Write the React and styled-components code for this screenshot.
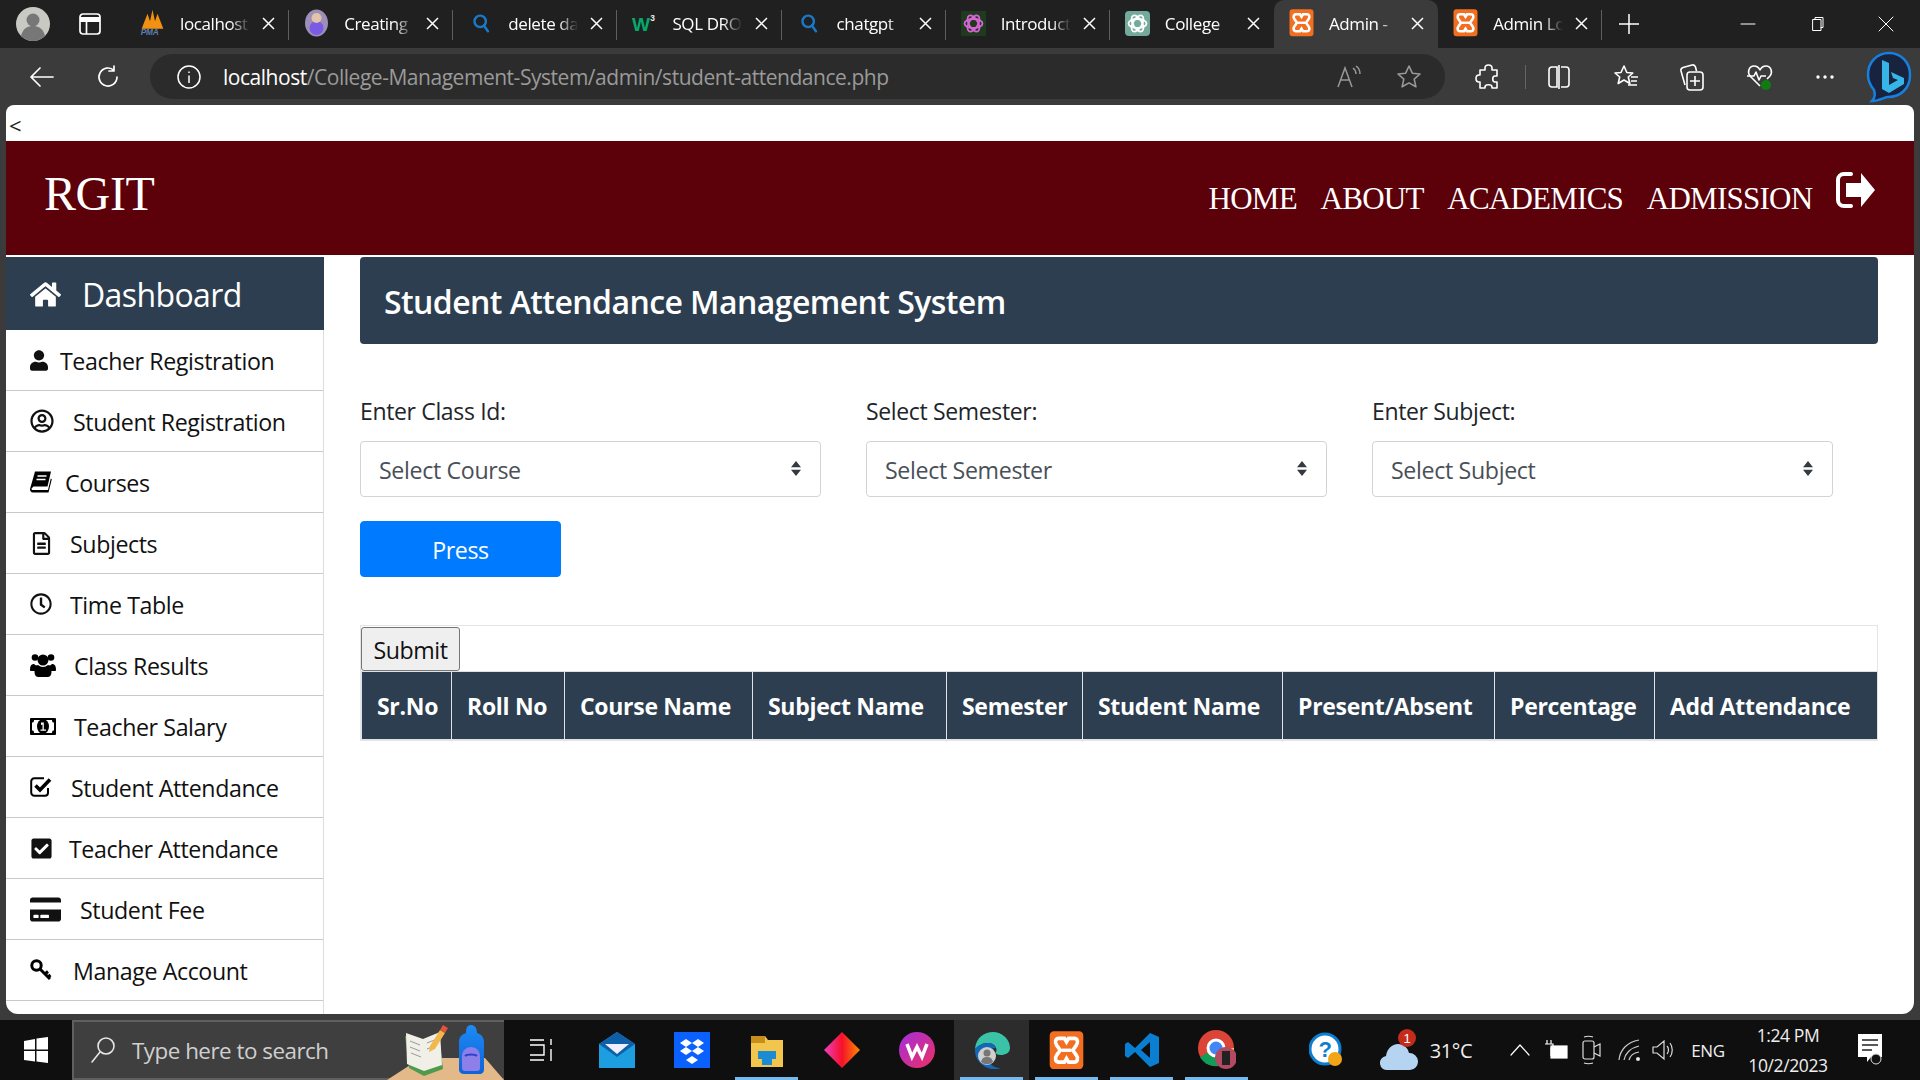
import React from "react";
import styled, { createGlobalStyle } from "styled-components";
import { FaHome, FaUser, FaRegUserCircle, FaRegFileAlt, FaRegClock, FaCheckSquare, FaCreditCard } from "react-icons/fa";

const ui = '"Open Sans", "Noto Sans", sans-serif';
const serif = '"Liberation Serif", serif';

const Global = createGlobalStyle`
  html, body { margin: 0; padding: 0; background: #3b3b3b; overflow: hidden; }
  * { box-sizing: border-box; }
`;

const Shell = styled.div`
  width: 1920px; height: 1080px; display: flex; flex-direction: column;
  background: #3b3b3b; font-family: ${ui}; overflow: hidden;
`;

/* ---------- browser tab strip ---------- */
const TabStrip = styled.div`
  height: 48px; flex: none; display: flex; align-items: stretch; background: #202020; color: #fff;
`;
const StripStart = styled.div`
  width: 125px; flex: none; display: flex; align-items: center; padding-left: 15px; gap: 28px;
`;
const TabItem = styled.div`
  width: 164.15px; flex: none; display: flex; align-items: center; padding: 0 14px 2px 15px;
  position: relative; font-size: 17px; letter-spacing: -0.4px;
  background: ${(p) => (p.$active ? "#3b3b3b" : "transparent")};
  border-radius: ${(p) => (p.$active ? "10px 10px 0 0" : "0")};
  &::after {
    content: ""; position: absolute; right: 0; top: 10px; bottom: 8px; width: 1px;
    background: ${(p) => (p.$sep ? "#5e5e5e" : "transparent")};
  }
`;
const TabIconSlot = styled.span`
  width: 25px; height: 25px; flex: none; margin-right: 15px; display: flex; align-items: center; justify-content: center;
`;
const TabTitle = styled.span`
  width: 70px; flex: none; overflow: hidden; white-space: nowrap;
  -webkit-mask-image: linear-gradient(90deg, #000 72%, transparent 100%);
  mask-image: linear-gradient(90deg, #000 72%, transparent 100%);
`;
const TabClose = styled.svg`
  width: 13px; height: 13px; flex: none; margin-left: auto;
`;
const NewTab = styled.svg` width: 22px; height: 22px; align-self: center; margin-left: 16px; flex: none; `;
const WinControls = styled.div`
  margin-left: auto; display: flex; align-items: center; width: 206px; padding-left: 0;
`;
const WinBtn = styled.span` width: 69px; display: flex; justify-content: center; `;

/* ---------- toolbar ---------- */
const Toolbar = styled.div`
  height: 57px; flex: none; display: flex; align-items: center; background: #3b3b3b; position: relative; padding-top: 0;
`;
const NavBtn = styled.span`
  width: ${(p) => p.$w}px; flex: none; display: flex; justify-content: center; align-items: center;
`;
const AddressBar = styled.div`
  width: 1295px; height: 45px; flex: none; margin-left: 0; background: #2b2b2b; border-radius: 23px;
  display: flex; align-items: center; padding-left: 27px; font-size: 21px; letter-spacing: -0.47px;
`;
const UrlHost = styled.span` color: #fff; margin-left: 22px; `;
const UrlPath = styled.span` color: #9a9a9a; `;
const AddressEnd = styled.div` margin-left: auto; display: flex; gap: 34px; padding-right: 23px; align-items: center; `;
const ToolDivider = styled.span` width: 1px; height: 24px; background: #666; flex: none; `;
const ToolGroup = styled.div` display: flex; align-items: center; flex: 1; padding-left: 30px; `;

/* ---------- page ---------- */
const Page = styled.div`
  height: 909px; flex: none; margin: 0 6px; background: #fff; border-radius: 8px 8px 12px 12px;
  display: flex; flex-direction: column; overflow: hidden; color: #212529;
`;
const BackNote = styled.div`
  height: 36px; flex: none; padding: 2px 0 0 3px; font-size: 22px; line-height: 36px; color: #222; font-family: ${ui};
`;
const Header = styled.header`
  height: 114px; flex: none; background: #5c000a; color: #fff; display: flex; align-items: center;
  padding: 0 38px 0 38px; font-family: ${serif};
`;
const Brand = styled.div` font-size: 48px; letter-spacing: -0.4px; line-height: 1; margin-top: -8px; `;
const NavList = styled.nav` margin-left: auto; display: flex; align-items: center; gap: 23.7px; `;
const NavLink = styled.a` font-size: 31px; letter-spacing: -0.75px; color: #fff; line-height: 1; `;
const Logout = styled.svg` width: 40px; height: 38px; margin: -16px 0 0 0; `;

const Body = styled.div` flex: 1; display: flex; margin-top: 2px; min-height: 0; `;
const Side = styled.aside` width: 318px; flex: none; border-right: 1px solid #ddd; `;
const SideHead = styled.div`
  height: 73px; margin-right: -1px; background: #2c3e50; color: #fff; display: flex; align-items: center; padding: 2px 0 0 24px; gap: 21px;
  font-size: 32px; letter-spacing: -0.6px;
`;
const SideItem = styled.a`
  height: 61px; display: flex; align-items: center; padding: 2px 0 0 24px; border-bottom: 1px solid #c9c9c9;
  color: #111; font-size: 23.2px; letter-spacing: -0.4px; gap: ${(p) => p.$gap}px;
  & > svg { width: ${(p) => p.$icon}px; height: ${(p) => p.$iconH || p.$icon}px; flex: none; margin-top: -2px; }
`;

const Main = styled.main` flex: 1; padding: 0 36px 0 36px; min-width: 0; `;
const TitleBar = styled.div`
  height: 87px; background: #2c3e50; color: #fff; border-radius: 4px; display: flex; align-items: center;
  padding: 2px 0 0 24px; font-size: 32px; font-weight: 600; letter-spacing: -0.57px;
`;
const FormGrid = styled.div`
  display: grid; grid-template-columns: repeat(3, 461px); column-gap: 45px; margin-top: 49px;
`;
const Field = styled.div` display: flex; flex-direction: column; `;
const Label = styled.label` height: 36px; line-height: 36px; font-size: 23px; letter-spacing: -0.35px; margin-bottom: 12px; `;
const SelectWrap = styled.div` position: relative; height: 56px; `;
const Select = styled.select`
  appearance: none; width: 100%; height: 100%; background: #fff; border: 1px solid #ced4da; border-radius: 4px;
  padding: 2px 18px 0; font: 23.2px ${ui}; letter-spacing: -0.35px; color: #495057;
`;
const SelectArrow = styled.svg`
  position: absolute; right: 19px; top: 19px; width: 12px; height: 17px; pointer-events: none;
`;
const PressBtn = styled.button`
  display: block; width: 201px; height: 56px; margin-top: 24px; background: #007bff; border: 1px solid #007bff;
  border-radius: 4px; color: #fff; font: 23.2px ${ui}; letter-spacing: -0.45px; padding-top: 2px;
`;
const TableBox = styled.div` margin-top: 48px; border: 1px solid #e3e6e9; `;
const SubmitBtn = styled.button`
  display: block; width: 99px; height: 44px; margin-top: 1px; background: #efefef; border: 1px solid #767676; border-radius: 3px;
  font: 23.2px ${ui}; letter-spacing: -0.45px; color: #111; padding: 1px 0 0;
`;
const Table = styled.table` width: 100%; border-collapse: collapse; table-layout: fixed; `;
const Col = styled.col` width: ${(p) => p.$w}px; `;
const Th = styled.th`
  height: 68px; padding: 0 0 0 15px; background: #2c3e50; color: #fff; border: 1px solid #dee2e6; text-align: left;
  font-size: 23px; font-weight: 700; letter-spacing: -0.3px; white-space: nowrap; overflow: hidden;
`;

/* ---------- taskbar ---------- */
const Taskbar = styled.div`
  height: 60px; flex: none; margin-top: 6px; background: #0f0f0f; display: flex; align-items: stretch; color: #fff;
`;
const StartBtn = styled.div` width: 72px; flex: none; display: flex; align-items: center; justify-content: center; `;
const SearchBox = styled.div`
  width: 432px; flex: none; background: #3f3f3f; border: 2px solid #5f5f5f; border-right: 0; border-bottom-width: 2px;
  display: flex; align-items: center; padding-left: 16px; color: #cfcfcf; font-size: 22.4px; letter-spacing: -0.5px; gap: 16px;
`;
const Scene = styled.svg` width: 117px; height: 58px; margin-left: auto; flex: none; align-self: flex-end; margin-bottom: -2px; `;
const Slot = styled.div`
  width: ${(p) => p.$w || 75}px; flex: none; display: flex; align-items: center; justify-content: center; position: relative;
  background: ${(p) => (p.$active ? "#2c2c2c" : "transparent")};
  &::after {
    content: ""; position: absolute; bottom: 0; height: 3px; left: 6px; right: 6px;
    background: ${(p) => (p.$open ? "#76b9ed" : "transparent")};
  }
`;
const Tray = styled.div` margin-left: 36px; display: flex; align-items: center; flex: 1; `;
const TraySlot = styled.div`
  width: ${(p) => p.$w}px; margin-left: ${(p) => p.$ml || 0}px; flex: none; display: flex; align-items: center; justify-content: center;
  font-size: ${(p) => p.$fs || 18}px; letter-spacing: -0.4px; color: #eee; white-space: nowrap;
`;
const Clock = styled.div`
  width: 106px; flex: none; display: flex; flex-direction: column; align-items: center; gap: 6px; font-size: 17.5px; letter-spacing: -0.4px; color: #eee;
`;

/* ---------- drawn icons ---------- */
const Line = ({ d, w = 24, h = 24, sw = 1.6, c = "#fff", vb = "0 0 24 24" }) => (
  <svg width={w} height={h} viewBox={vb} fill="none" stroke={c} strokeWidth={sw} strokeLinecap="round" strokeLinejoin="round"><path d={d} /></svg>
);
const Xampp = ({ s = 25 }) => (
  <svg width={s} height={s * 1.1} viewBox="0 0 25 27">
    <rect x="0.5" width="24" height="27" rx="3" fill="#f26f21" />
    <path d="M7 5h4l1.5 2.5L14 5h4c2.5 0 3 3 1.5 5L17 13.5l2.5 3.5c1.5 2 1 5-1.5 5h-4l-1.5-2.5L11 22H7c-2.5 0-3-3-1.5-5L8 13.5 5.5 10C4 8 4.5 5 7 5z" fill="none" stroke="#fff" strokeWidth="2.6" />
    <path d="M9 13.5h7" stroke="#fff" strokeWidth="2.4" />
  </svg>
);
const Openai = ({ c, bg, rx = 0 }) => (
  <svg width="25" height="25" viewBox="0 0 25 25">
    <rect width="25" height="25" rx={rx} fill={bg} />
    <g fill="none" stroke={c} strokeWidth="1.8">
      <ellipse cx="12.5" cy="12.5" rx="9" ry="4.5" />
      <ellipse cx="12.5" cy="12.5" rx="9" ry="4.5" transform="rotate(60 12.5 12.5)" />
      <ellipse cx="12.5" cy="12.5" rx="9" ry="4.5" transform="rotate(120 12.5 12.5)" />
    </g>
  </svg>
);
const Search = () => (
  <svg width="18" height="20" viewBox="0 0 22 24" fill="none" stroke="#1a78c9" strokeWidth="3"><circle cx="10" cy="10" r="7" /><path d="M14.5 15l5 7" strokeLinecap="round" /></svg>
);
const favicons = [
  <svg key="a" width="30" height="34" viewBox="0 0 30 34"><path d="M2 24L9 6l3 9 3-14 3 14 3-9 7 18z" fill="#f29111" /><text x="1" y="32" fontSize="10" fontStyle="italic" fontWeight="700" fontFamily="Liberation Sans" fill="#5d7fb5">PMA</text></svg>,
  <svg key="b" width="25" height="28" viewBox="0 0 25 28"><ellipse cx="12.5" cy="14" rx="11.5" ry="13.5" fill="#9d8fb8" /><circle cx="12.5" cy="19" r="7" fill="#7a5be6" /><circle cx="12.5" cy="9" r="5" fill="#e3c3a9" /></svg>,
  <Search key="c" />,
  <svg key="d" width="30" height="24" viewBox="0 0 30 24"><text x="0" y="21" fontSize="23" fontWeight="700" fontFamily="Liberation Sans" fill="#04aa6d">W</text><text x="22" y="10" fontSize="10" fontWeight="700" fontFamily="Liberation Sans" fill="#eee">3</text></svg>,
  <Search key="e" />,
  <Openai key="f" c="#d966d6" bg="#1f3a1f" />,
  <Openai key="g" c="#fff" bg="#74aa9c" rx={4} />,
  <Xampp key="h" />,
  <Xampp key="i" />,
];
const tabs = [
  ["localhost", true], ["Creating", true], ["delete data", true], ["SQL DROP", true], ["chatgpt", true],
  ["Introduction", true], ["College", false], ["Admin - ", false, true], ["Admin Login", true],
];

const BookIcon = (props) => (
  <svg viewBox="0 0 22 21" {...props}>
    <path d="M5 0h16l-3.500 15H3.500L1.500 17c0 1 .5 1.500 1.500 1.500h15l2.800-11.500 1 .8L18.500 21H3C1 21 0 19.500 0 17.500z" fill="#000" />
    <path d="M7.500 4.500h9M6.500 8h9" stroke="#fff" strokeWidth="1.600" />
  </svg>
);
const UsersIcon = (props) => (
  <svg viewBox="0 0 26 24" {...props} fill="#000">
    <circle cx="13" cy="7" r="5.500" /><circle cx="5" cy="4.500" r="3.300" /><circle cx="21" cy="4.500" r="3.300" />
    <path d="M4 11c1 1 2 1.500 3 1.500-1 2-1.500 3.500-1.500 5.500H1c-.7 0-1-.5-1-1.500C0 13 1.500 10.500 4 11zM22 11c-1 1-2 1.500-3 1.500 1 2 1.500 3.500 1.500 5.500H25c.7 0 1-.5 1-1.500 0-3.500-1.500-6-4-5.500z" />
    <path d="M8 12c3 2.500 7 2.500 10 0 2 0 3.500 3 3.500 7 0 3-1.500 5-4 5h-9c-2.500 0-4-2-4-5 0-4 1.500-7 3.500-7z" />
  </svg>
);
const MoneyIcon = (props) => (
  <svg viewBox="0 0 26 17" {...props}>
    <rect width="26" height="17" rx="1" fill="#000" />
    <path d="M4 2h18c0 1.500 1 2.500 2 2.500v8c-1 0-2 1-2 2.500H4c0-1.500-1-2.500-2-2.500v-8c1 0 2-1 2-2.500z" fill="#fff" />
    <ellipse cx="13" cy="8.500" rx="6" ry="7.500" fill="#000" />
    <path d="M11 4.500h2.800v7H16v1.200h-5.500v-1.200h2v-5l-1.500.6z" fill="#fff" />
    <path d="M0 3h3.500M0 14h3.500M22.500 3H26M22.500 14H26" stroke="#000" strokeWidth="2.400" />
  </svg>
);
const CheckBoxIcon = (props) => (
  <svg viewBox="0 0 22 20" {...props} fill="none" stroke="#000">
    <path d="M18 11v4.500c0 2-1 3.300-3 3.300H4.500c-2 0-3.300-1.300-3.300-3.300v-11c0-2 1.300-3.300 3.300-3.300H14" strokeWidth="2" />
    <path d="M5.500 8.500L10 13 20 2.500" strokeWidth="3.600" />
  </svg>
);
const KeyIcon = (props) => (
  <svg viewBox="0 0 22 22" {...props} fill="none" stroke="#000" strokeWidth="3">
    <circle cx="6.500" cy="6.500" r="4.700" /><path d="M10 10l10 10M15 15l3-2.500M18 18l2.500-2" />
  </svg>
);

const menu = [
  { t: "Teacher Registration", I: FaUser, icon: 18, iconH: 21, gap: 12 },
  { t: "Student Registration", I: FaRegUserCircle, icon: 24, gap: 19 },
  { t: "Courses", I: BookIcon, icon: 22, gap: 13 },
  { t: "Subjects", I: FaRegFileAlt, icon: 23, gap: 17 },
  { t: "Time Table", I: FaRegClock, icon: 22, gap: 18 },
  { t: "Class Results", I: UsersIcon, icon: 26, iconH: 24, gap: 18 },
  { t: "Teacher Salary", I: MoneyIcon, icon: 26, iconH: 17, gap: 18 },
  { t: "Student Attendance", I: CheckBoxIcon, icon: 22, iconH: 20, gap: 19 },
  { t: "Teacher Attendance", I: FaCheckSquare, icon: 23, gap: 16 },
  { t: "Student Fee", I: FaCreditCard, icon: 31, gap: 19 },
  { t: "Manage Account", I: KeyIcon, icon: 22, gap: 21 },
];
const heads = [
  ["Sr.No", 90], ["Roll No", 113], ["Course Name", 188], ["Subject Name", 194], ["Semester", 136],
  ["Student Name", 200], ["Present/Absent", 212], ["Percentage", 160], ["Add Attendance", 223],
];
const fields = [["Enter Class Id:", "Select Course"], ["Select Semester:", "Select Semester"], ["Enter Subject:", "Select Subject"]];

const Arrow = () => (
  <SelectArrow viewBox="0 0 12 17"><path d="M6 1l5 6.2H1zM6 16l5-6.2H1z" fill="#343a40" /></SelectArrow>
);

export default function App() {
  return (
    <Shell>
      <Global />
      <TabStrip>
        <StripStart>
          <svg width="36" height="36" viewBox="0 0 36 36"><circle cx="18" cy="18" r="17" fill="#c9c9c4" /><circle cx="18" cy="14" r="6.5" fill="#777" /><path d="M6 30c2-8 7-10 12-10s10 2 12 10a17 17 0 0 1-24 0z" fill="#777" /></svg>
          <svg width="22" height="22" viewBox="0 0 22 22" fill="none" stroke="#fff" strokeWidth="1.7"><rect x="1" y="1" width="20" height="20" rx="3" /><path d="M1 6.500h20" strokeWidth="5" /><path d="M7.500 7v14" /></svg>
        </StripStart>
        {tabs.map(([t, sep, active], i) => (
          <TabItem key={t} $sep={sep} $active={active}>
            <TabIconSlot>{favicons[i]}</TabIconSlot>
            <TabTitle>{t}</TabTitle>
            <TabClose viewBox="0 0 13 13" fill="none" stroke="#fff" strokeWidth="1.5"><path d="M1 1l11 11M12 1L1 12" /></TabClose>
          </TabItem>
        ))}
        <NewTab viewBox="0 0 22 22" fill="none" stroke="#fff" strokeWidth="1.5"><path d="M11 1v20M1 11h20" /></NewTab>
        <WinControls>
          <WinBtn><Line w={16} h={16} sw={1} vb="0 0 16 16" d="M1 8h14" /></WinBtn>
          <WinBtn><Line w={16} h={16} sw={1} vb="0 0 16 16" d="M4 3.500h8v11H4zM6 3.500V1.500h8v10h-2" /></WinBtn>
          <WinBtn><Line w={16} h={16} sw={1} vb="0 0 16 16" d="M1 1l14 14M15 1L1 15" /></WinBtn>
        </WinControls>
      </TabStrip>

      <Toolbar>
        <NavBtn $w={84}><Line w={26} h={24} sw={1.7} vb="0 0 26 24" d="M24 12H2M11 3l-9 9 9 9" /></NavBtn>
        <NavBtn $w={48}><Line w={26} h={26} sw={1.7} vb="0 0 26 26" d="M22 13a9 9 0 1 1-3-6.700M19 2v5h-5" /></NavBtn>
        <NavBtn $w={18} />
        <AddressBar>
          <svg width="24" height="24" viewBox="0 0 24 24" fill="none" stroke="#fff" strokeWidth="1.5"><circle cx="12" cy="12" r="11" /><path d="M12 10.500V18M12 6.500v1.500" /></svg>
          <UrlHost>localhost</UrlHost>
          <UrlPath>/College-Management-System/admin/student-attendance.php</UrlPath>
          <AddressEnd>
            <svg width="26" height="24" viewBox="0 0 26 24" fill="none" stroke="#999" strokeWidth="1.5"><path d="M2 22L9 3l7 19M4.500 15h9M17 3c2 1.500 3 3.500 3 6M20 1c3 2 4 4.500 4 8" /></svg>
            <svg width="26" height="26" viewBox="0 0 26 26" fill="none" stroke="#999" strokeWidth="1.6" strokeLinejoin="round"><path d="M13 2l3.300 7.200 7.700.8-5.800 5.100 1.700 7.700L13 18.900l-6.900 3.900 1.700-7.700L2 10l7.700-.8z" /></svg>
          </AddressEnd>
        </AddressBar>
        <ToolGroup>
          <svg width="26" height="28" viewBox="0 0 26 28" fill="none" stroke="#fff" strokeWidth="1.6" strokeLinejoin="round"><path d="M10 5c0-4 7-4 7 0v2h5v6h-2c-3 0-3 6 0 6h2v6h-5v-1c0-3-7-3-7 0v1H5v-6H4c-4 0-4-7 0-7h1V7h5z" /></svg>
          <NavBtn $w={24} />
          <ToolDivider />
          <NavBtn $w={21} />
          <svg width="24" height="26" viewBox="0 0 24 26" fill="none" stroke="#fff" strokeWidth="1.6"><path d="M10 3H5a3 3 0 0 0-3 3v14a3 3 0 0 0 3 3h5zM14 3h5a3 3 0 0 1 3 3v14a3 3 0 0 1-3 3h-5M12 1v24" /></svg>
          <NavBtn $w={42} />
          <svg width="26" height="26" viewBox="0 0 26 26" fill="none" stroke="#fff" strokeWidth="1.6" strokeLinejoin="round"><path d="M11 2l2.800 6.500 6 .5-4.500 4 1.500 6.500L11 16l-5.800 3.500L6.700 13 2 9l6-.5zM18 13h7M18 17h6M15 21h9" /></svg>
          <NavBtn $w={40} />
          <svg width="26" height="28" viewBox="0 0 26 28" fill="none" stroke="#fff" strokeWidth="1.6" strokeLinejoin="round"><path d="M6 22L2 8c-.5-2 .5-3 2-3.500L13 2c2-.5 3 .5 3.500 2l1 4" /><rect x="8" y="9" width="16" height="18" rx="3" /><path d="M16 13v10M11 18h10" /></svg>
          <NavBtn $w={41} />
          <svg width="28" height="28" viewBox="0 0 28 28" fill="none" stroke="#fff" strokeWidth="1.6" strokeLinejoin="round"><path d="M14 23L4 13C1 9 3 3 8 3c3 0 5 2 6 4 1-2 3-4 6-4 5 0 7 6 4 10l-3 3" /><path d="M1 13h7l2-4 3 8 2-4h5" /><circle cx="20" cy="22" r="5" fill="#107c10" stroke="none" /></svg>
          <NavBtn $w={41} />
          <svg width="20" height="6" viewBox="0 0 20 6" fill="#fff"><circle cx="3" cy="3" r="1.7" /><circle cx="10" cy="3" r="1.7" /><circle cx="17" cy="3" r="1.7" /></svg>
          <NavBtn $w={31} />
          <svg width="46" height="52" viewBox="0 0 46 52"><path d="M23 2c12 0 21 9 21 22 0 14-10 22-22 22-3 0-9 4-16 4 4-4 3-8 2-11C4 34 2 29 2 24 2 11 11 2 23 2z" fill="#17233f" stroke="#1680e0" strokeWidth="2.5" /><path d="M16 9l7 3v22l9-5-5-2-2-6 13 6v6l-15 9-7-4z" fill="#37b5e8" /></svg>
        </ToolGroup>
      </Toolbar>

      <Page>
        <BackNote>&lt;</BackNote>
        <Header>
          <Brand>RGIT</Brand>
          <NavList>
            <NavLink>HOME</NavLink>
            <NavLink>ABOUT</NavLink>
            <NavLink>ACADEMICS</NavLink>
            <NavLink>ADMISSION</NavLink>
            <Logout viewBox="0 0 40 38"><path d="M15 3H8a6 6 0 0 0-6 6v20a6 6 0 0 0 6 6h7" fill="none" stroke="#fff" strokeWidth="4" strokeLinecap="round" /><path d="M25 2l14 17-14 17V26H10V12h15z" fill="#fff" /></Logout>
          </NavList>
        </Header>
        <Body>
          <Side>
            <SideHead><FaHome size={31} />Dashboard</SideHead>
            {menu.map(({ t, I, icon, iconH, gap }) => (
              <SideItem key={t} $icon={icon} $iconH={iconH} $gap={gap}><I />{t}</SideItem>
            ))}
          </Side>
          <Main>
            <TitleBar>Student Attendance Management System</TitleBar>
            <FormGrid>
              {fields.map(([label, ph]) => (
                <Field key={label}>
                  <Label>{label}</Label>
                  <SelectWrap>
                    <Select defaultValue={ph}><option>{ph}</option></Select>
                    <Arrow />
                  </SelectWrap>
                </Field>
              ))}
            </FormGrid>
            <PressBtn>Press</PressBtn>
            <TableBox>
              <SubmitBtn>Submit</SubmitBtn>
              <Table>
                <colgroup>{heads.map(([h, w]) => <Col key={h} $w={w} />)}</colgroup>
                <thead><tr>{heads.map(([h]) => <Th key={h}>{h}</Th>)}</tr></thead>
              </Table>
            </TableBox>
          </Main>
        </Body>
      </Page>

      <Taskbar>
        <StartBtn>
          <svg width="24" height="26" viewBox="0 0 24 26" fill="#fff"><path d="M0 4l11-2v10.500H0zM12.500 1.500L24 0v12.500H12.500zM0 14h11v10.500L0 23zM12.500 14H24v12l-11.500-1.500z" /></svg>
        </StartBtn>
        <SearchBox>
          <svg width="26" height="28" viewBox="0 0 26 28" fill="none" stroke="#e6e6e6" strokeWidth="1.6"><circle cx="16" cy="10" r="8" /><path d="M10 16L2 26" strokeLinecap="round" /></svg>
          Type here to search
          <Scene viewBox="0 0 117 58">
            <defs>
              <linearGradient id="bag" x1="0" x2="0" y1="0" y2="1"><stop offset="0" stopColor="#1c8bf5" /><stop offset="1" stopColor="#0f62d8" /></linearGradient>
            </defs>
            <path d="M34 36h64l19 22H0z" fill="#e3b98a" />
            <path d="M18 14l17 6 17-7 4 34-19 7-15-8z" fill="#4f9a4d" />
            <path d="M19 11l17 6 17-7 2 33-18 6-17-7z" fill="#f0f0e8" />
            <path d="M23 19l10 4M23 25l10 4M24 31l10 4M40 21l10-4M40 27l10-4" stroke="#999" strokeWidth="1" />
            <path d="M43 24l10-16 5 3-10 16-6 3z" fill="#f3b84b" />
            <path d="M53 8l3-5 5 3-3 5z" fill="#e2553d" />
            <path d="M72 20c0-6 4-8 7-9 0-6 2-8 5-8s6 2 6 8c4 1 7 4 7 9v28c0 2-2 4-4 4H77c-3 0-5-2-5-4z" fill="url(#bag)" />
            <path d="M75 34c0-6 5-9 9-9s9 3 9 9v12c0 2-1 3-3 3H78c-2 0-3-1-3-3z" fill="#8c7fe8" />
            <path d="M78 34c2-2 10-2 12 0" stroke="#2b3fd0" strokeWidth="2" fill="none" />
          </Scene>
        </SearchBox>
        <Slot>
          <svg width="24" height="24" viewBox="0 0 24 24" fill="none" stroke="#fff" strokeWidth="1.4"><path d="M0 2h14M0 22h14M0 7h14v10H0M21 1v6M21 11v12M14 7v10" /></svg>
        </Slot>
        <Slot>
          <svg width="36" height="36" viewBox="0 0 36 36"><path d="M0 12L18 0l18 12v24H0z" fill="#1d9ee0" /><path d="M0 12l18 13 18-13-18-12z" fill="#0f5fa8" /><path d="M6 12h24L18 22z" fill="#eef" /></svg>
        </Slot>
        <Slot>
          <svg width="36" height="36" viewBox="0 0 36 36"><rect width="36" height="36" fill="#0a61fe" /><path d="M12 7l6 4-6 4-6-4zM24 7l6 4-6 4-6-4zM12 15l6 4-6 4-6-4zM24 15l6 4-6 4-6-4zM18 24l6 4-6 4-6-4z" fill="#fff" /></svg>
        </Slot>
        <Slot $open>
          <svg width="34" height="34" viewBox="0 0 34 34"><path d="M1 3h14l3 4h15v27H1z" fill="#f2c54c" /><path d="M1 3h14v7H1z" fill="#c78e1c" /><path d="M8 18h18v8h-4v6H12v-6H8z" fill="#1b8bd4" /></svg>
        </Slot>
        <Slot>
          <svg width="36" height="36" viewBox="0 0 36 36"><defs><linearGradient id="dm" x1="0" x2="1" y1="0" y2="0"><stop offset="0" stopColor="#ee3fc0" /><stop offset="0.5" stopColor="#f7102a" /><stop offset="1" stopColor="#fc8a00" /></linearGradient></defs><path d="M18 0l18 18-18 18L0 18z" fill="url(#dm)" /></svg>
        </Slot>
        <Slot>
          <svg width="36" height="36" viewBox="0 0 36 36"><defs><linearGradient id="wps" x1="0" x2="1" y1="0" y2="1"><stop offset="0" stopColor="#a22ee0" /><stop offset="1" stopColor="#ee2f60" /></linearGradient></defs><circle cx="18" cy="18" r="18" fill="url(#wps)" /><path d="M8 12l5 13 5-10 5 10 5-13" fill="none" stroke="#fff" strokeWidth="3.5" /></svg>
        </Slot>
        <Slot $active $open>
          <svg width="38" height="38" viewBox="0 0 38 38"><path d="M2 18C3 6 12 1 20 1c9 0 17 7 17 16 0 5-5 7-9 7-3 0-6-1-5-3 2-4-2-9-8-9-6 0-10 3-13 6z" fill="#3bc3a8" /><path d="M2 18c3-3 7-6 13-6 4 0 7 2 8 5-6 0-11 6-6 15 2 3 6 5 11 5-12 5-27-5-26-19z" fill="#1468b8" /><circle cx="14" cy="25" r="9" fill="#cfcfcf" /><circle cx="14" cy="22" r="3.5" fill="#777" /><path d="M8 31c1-4 3-5 6-5s5 1 6 5a9 9 0 0 1-12 0z" fill="#777" /></svg>
        </Slot>
        <Slot $open><Xampp s={35} /></Slot>
        <Slot $open>
          <svg width="36" height="36" viewBox="0 0 36 36"><path d="M26 1l9 4v26l-9 4L11 20l-7 6-3-2v-12l3-2 7 6zM26 10l-9 8 9 8z" fill="#0a7fd1" fillRule="evenodd" /></svg>
        </Slot>
        <Slot $open>
          <svg width="38" height="40" viewBox="0 0 38 40"><circle cx="18" cy="18" r="18" fill="#db4437" /><path d="M18 18L2 27a18 18 0 0 0 19 9z" fill="#0f9d58" /><path d="M18 18l3 18a18 18 0 0 0 15-18z" fill="#ffcd40" /><circle cx="18" cy="18" r="8" fill="#4285f4" stroke="#fff" strokeWidth="3" /><circle cx="28" cy="28" r="11" fill="#b14a62" /><rect x="24" y="21" width="8" height="14" fill="#222" /></svg>
        </Slot>
        <Tray>
          <TraySlot $w={72}>
            <svg width="34" height="36" viewBox="0 0 34 36"><circle cx="16" cy="17" r="15" fill="#fff" stroke="#0a7fd1" strokeWidth="3" /><text x="16" y="25" fontSize="22" fontWeight="700" textAnchor="middle" fontFamily="Liberation Sans" fill="#0a7fd1">?</text><circle cx="26" cy="27" r="7" fill="#f2a516" /></svg>
          </TraySlot>
          <TraySlot $w={74}>
            <svg width="38" height="44" viewBox="0 0 38 44"><path d="M8 42a7 7 0 0 1-2-14c1-8 7-12 12-12 6 0 10 4 11 9a8.500 8.500 0 0 1 1 17z" fill="#b4d4f2" /><circle cx="27" cy="10" r="9" fill="#c42b1c" /><text x="27" y="15" fontSize="13" textAnchor="middle" fontFamily="Liberation Sans" fill="#fff">1</text></svg>
          </TraySlot>
          <TraySlot $w={30} $fs={20}>31°C</TraySlot>
          <TraySlot $w={36} $ml={36}><Line w={20} h={14} sw={1.2} vb="0 0 20 14" d="M1 12l9-10 9 10" /></TraySlot>
          <TraySlot $w={36}><svg width="24" height="22" viewBox="0 0 24 22" fill="none" stroke="#fff" strokeWidth="1.2"><path d="M3 1v4M7 1v4M1 5h8v4H7v8" /><rect x="7" y="7" width="16" height="12" fill="#fff" /></svg></TraySlot>
          <TraySlot $w={36}><svg width="22" height="30" viewBox="0 0 22 30" fill="none" stroke="#ddd" strokeWidth="1.2"><rect x="2" y="6" width="11" height="18" rx="2" /><path d="M13 12l6-3v12l-6-3M3 2c3-1 6-1 9 0M3 28c3 1 6 1 9 0" /></svg></TraySlot>
          <TraySlot $w={37}><svg width="24" height="24" viewBox="0 0 24 24" fill="none" stroke="#ccc" strokeWidth="1.2"><path d="M2 22C3 12 10 4 22 2M7 22c1-6 6-12 15-14M12 22c1-4 4-7 10-8" /><circle cx="21" cy="21" r="1.5" fill="#fff" /></svg></TraySlot>
          <TraySlot $w={34}><svg width="24" height="24" viewBox="0 0 24 24" fill="none" stroke="#ddd" strokeWidth="1.2"><path d="M1 9h4l7-6v18l-7-6H1zM15 8c2 2 2 6 0 8M18 5c3 4 3 10 0 14" /></svg></TraySlot>
          <TraySlot $w={54} $fs={17}>ENG</TraySlot>
          <Clock><span>1:24 PM</span><span>10/2/2023</span></Clock>
          <TraySlot $w={58}>
            <svg width="26" height="34" viewBox="0 0 26 34"><path d="M1 1h24v23H14l-4 5v-5H1z" fill="#fff" /><path d="M5 7h16M5 12h16M5 17h10" stroke="#222" strokeWidth="1.5" /><circle cx="19" cy="26" r="5" fill="#111" stroke="#ddd" /></svg>
          </TraySlot>
        </Tray>
      </Taskbar>
    </Shell>
  );
}
